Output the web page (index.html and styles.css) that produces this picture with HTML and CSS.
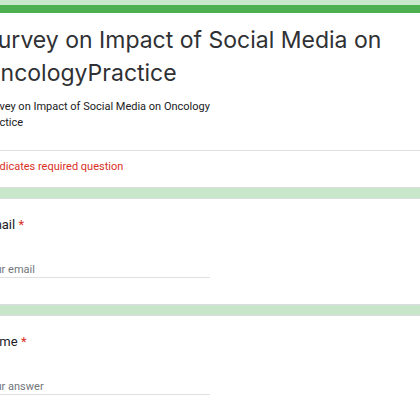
FILE: index.html
```html
<!DOCTYPE html>
<html lang="en">
<head>
    <meta charset="UTF-8">
    <meta name="viewport" content="width=device-width, initial-scale=1.0">
    <title>Survey on Impact of Social Media on OncologyPractice</title>
    <link rel="stylesheet" href="styles.css">
</head>
<body>
    <div class="form">
        <!-- En-tête du formulaire -->
        <div class="card header-card">
            <div class="header-top">
                <h1 class="form-title">Survey on Impact of Social Media on OncologyPractice</h1>
                <div class="form-desc">Survey on Impact of Social Media on Oncology<br>Practice</div>
            </div>
            <div class="required-legend">* Indicates required question</div>
        </div>

        <!-- Question : email -->
        <div class="card question-card">
            <div class="question-label">Email <span class="required">*</span></div>
            <input type="email" class="answer-input" placeholder="Your email">
        </div>

        <!-- Question : nom -->
        <div class="card question-card">
            <div class="question-label">Name <span class="required">*</span></div>
            <input type="text" class="answer-input" placeholder="Your answer">
        </div>
    </div>
</body>
</html>
```

FILE: styles.css
```css
body {
    margin: 0;
    background-color: #c8e6c9;
    font-family: Roboto, "Liberation Sans", Arial, sans-serif;
    color: #202124;
}

.form {
    margin-left: -42px;
    width: 504px;
    padding-top: 5px;
}

.card {
    background-color: #fff;
    border: 1px solid #dadce0;
    border-radius: 8px;
    margin-bottom: 10px;
    padding: 0 24px;
}

.header-card {
    border-top: 8px solid #4caf50;
    border-radius: 8px 8px 0 0;
}

.header-top {
    margin: 0 -24px;
    padding: 11px 24px 19px;
    border-bottom: 1px solid #e0e0e0;
}

.form-title {
    margin: 0;
    font-family: Inter, Roboto, sans-serif;
    font-size: 23px;
    font-weight: 400;
    line-height: 33px;
    color: #303134;
}

.form-desc {
    margin-top: 9px;
    font-size: 11px;
    line-height: 16px;
}

.required-legend {
    padding: 8px 0 12px;
    font-size: 11px;
    line-height: 16px;
    color: #d93025;
}

.question-card {
    padding-top: 16px;
    padding-bottom: 26px;
}

.question-label {
    font-size: 13px;
    line-height: 20px;
}

.required {
    color: #d93025;
}

.answer-input {
    display: block;
    width: 50%;
    height: 17px;
    margin-top: 26px;
    padding: 0;
    border: none;
    border-bottom: 1px solid #e0e0e0;
    box-sizing: border-box;
    font-family: inherit;
    font-size: 11px;
    line-height: 16px;
    outline: none;
    background: transparent;
}

.answer-input::placeholder {
    color: #70757a;
}
```
